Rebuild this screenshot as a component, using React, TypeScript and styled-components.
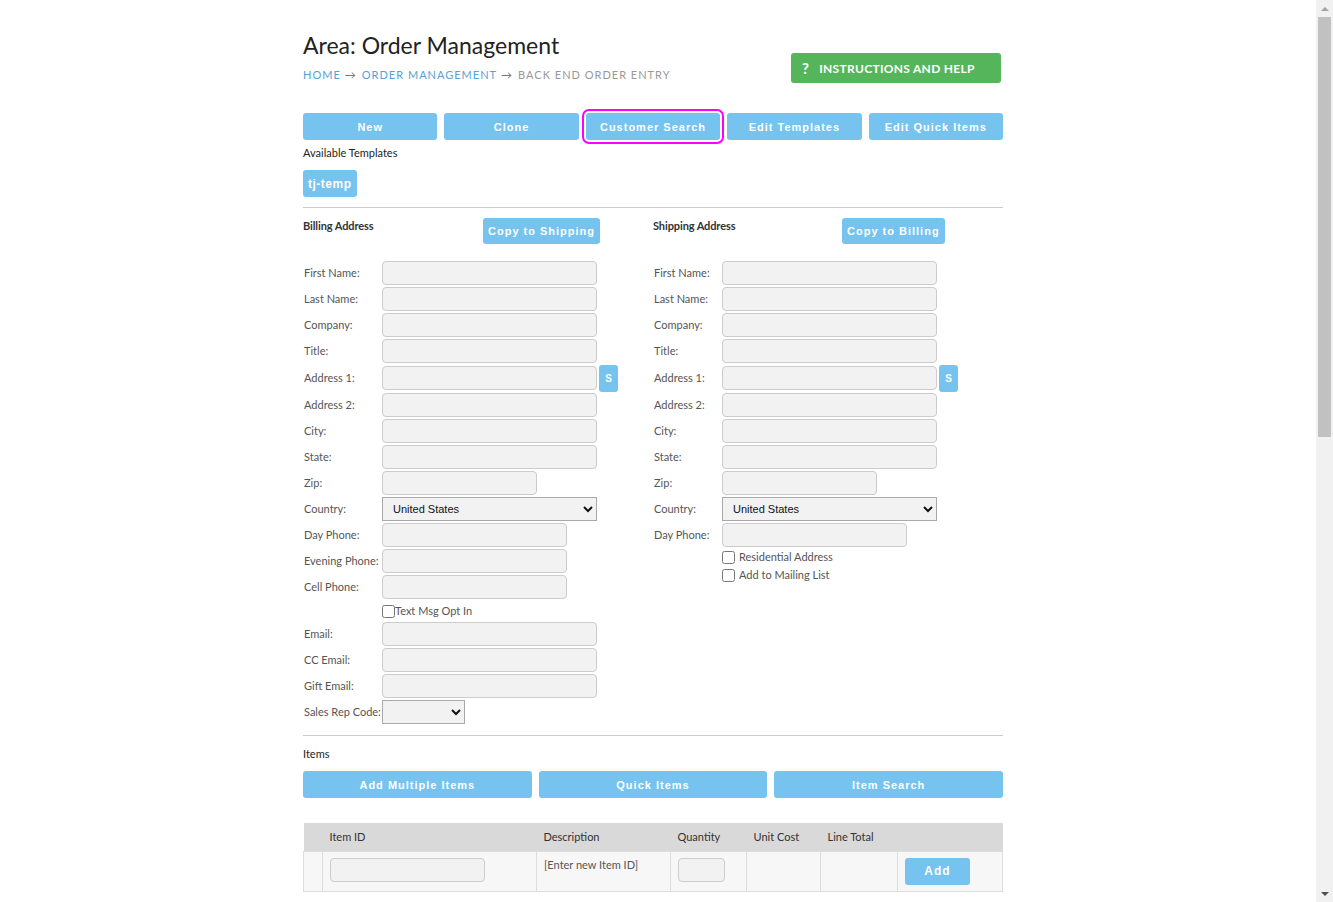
import React from "react"
import styled, { createGlobalStyle } from "styled-components"

const GlobalStyle = createGlobalStyle`
  * { box-sizing: border-box; }
  body {
    margin: 0;
    background: #fff;
    color: #333;
    font-family: Lato, "Open Sans", Arial, sans-serif;
  }
`

const BLUE = "#76c3ef"

const Shell = styled.div`
  display: flex;
  height: 100vh;
  overflow: hidden;
`

const Main = styled.main`
  flex: 1;
  overflow: hidden;
`

const ScrollTrack = styled.div`
  width: 17px;
  flex-shrink: 0;
  display: flex;
  flex-direction: column;
  align-items: center;
  background: #f1f1f1;
`

const ScrollArrow = styled.div<{ $down?: boolean }>`
  height: 17px;
  display: flex;
  align-items: center;
  justify-content: center;
  margin-top: ${(p) => (p.$down ? "auto" : "0")};

  &::before {
    content: "";
    border-left: 4px solid transparent;
    border-right: 4px solid transparent;
    ${(p) =>
      p.$down
        ? "border-top: 4px solid #505050;"
        : "border-bottom: 4px solid #a3a3a3;"}
  }
`

const ScrollThumb = styled.div`
  width: 13px;
  height: 420px;
  background: #c1c1c1;
`

const Page = styled.div`
  width: 710px;
  margin: 0 auto;
  padding: 30px 10px 10px 0;
`

const Header = styled.header`
  display: flex;
  justify-content: space-between;
  align-items: flex-start;
`

const Title = styled.h1`
  margin: 0;
  font: 400 23px/30px Lato, sans-serif;
  color: #222;
`

const Breadcrumb = styled.nav`
  margin-top: 8px;
  font: 400 11px/14px Lato, sans-serif;
  letter-spacing: 1px;
  text-transform: uppercase;
`

const Crumb = styled.span<{ $current?: boolean }>`
  color: ${(p) => (p.$current ? "#999" : "#5a9fd6")};
`

const Arrow = styled.span`
  color: #777;
  margin: 0 6px 0 4px;
  letter-spacing: 0;
`

const HelpButton = styled.button`
  margin: 23px 2px 0 0;
  width: 210px;
  height: 30px;
  display: flex;
  align-items: center;
  gap: 10px;
  padding: 0 0 0 11px;
  border: 0;
  border-radius: 3px;
  background: #55b55b;
  color: #fff;
  font: 700 12px Lato, sans-serif;
  letter-spacing: 0.3px;
  text-transform: uppercase;
  cursor: pointer;

  span {
    font-size: 15px;
    font-weight: 700;
  }
`

const Toolbar = styled.div<{ $cols: number; $top: number }>`
  display: grid;
  grid-template-columns: repeat(${(p) => p.$cols}, 1fr);
  gap: 7px;
  margin-top: ${(p) => p.$top}px;
  width: 700px;
`

const ActionButton = styled.button<{ $highlight?: boolean }>`
  height: 27px;
  border: 0;
  border-radius: 3px;
  background: ${BLUE};
  color: #fff;
  font: 700 11px "Liberation Sans", Arial, sans-serif;
  letter-spacing: 1px;
  cursor: pointer;
  outline: ${(p) => (p.$highlight ? "2px solid #ff00ff" : "none")};
  outline-offset: 2px;
`

const SectionLabel = styled.div<{ $top: number }>`
  margin-top: ${(p) => p.$top}px;
  font: 400 11px/14px Lato, sans-serif;
  color: #222;
`

const TemplateButton = styled.button`
  margin-top: 10px;
  height: 27px;
  padding: 0 5px;
  border: 0;
  border-radius: 3px;
  background: ${BLUE};
  color: #fff;
  font: 700 12px "Liberation Sans", Arial, sans-serif;
  letter-spacing: 0.5px;
`

const Divider = styled.hr<{ $top: number }>`
  margin: ${(p) => p.$top}px 0 0;
  width: 700px;
  border: 0;
  border-top: 1px solid #ccc;
`

const AddressGrid = styled.div`
  display: grid;
  grid-template-columns: 350px 350px;
  margin-top: 10px;
`

const ColumnHead = styled.div<{ $labelWidth: number }>`
  display: grid;
  grid-template-columns: ${(p) => p.$labelWidth}px auto;
  align-items: start;
  height: 26px;
  margin-bottom: 16px;
`

const ColumnTitle = styled.div`
  padding-top: 1px;
  font: 700 11px/14px Lato, sans-serif;
  letter-spacing: -0.1px;
  color: #333;
`

const CopyButton = styled.button`
  justify-self: start;
  height: 26px;
  padding: 0 5px;
  border: 0;
  border-radius: 3px;
  background: ${BLUE};
  color: #fff;
  font: 700 11px "Liberation Sans", Arial, sans-serif;
  letter-spacing: 1px;
`

const FormRow = styled.div<{ $tall?: boolean }>`
  display: flex;
  align-items: center;
  min-height: ${(p) => (p.$tall ? 28 : 26)}px;
`

const FieldLabel = styled.label<{ $w: number }>`
  width: ${(p) => p.$w}px;
  flex-shrink: 0;
  padding-left: 1px;
  font: 400 11px/14px Lato, sans-serif;
  color: #555;
  white-space: nowrap;
`

const TextField = styled.input<{ $w: number }>`
  width: ${(p) => p.$w}px;
  height: 24px;
  border: 1px solid #ccc;
  border-radius: 4px;
  background: #f2f2f2;
  font: 400 12px Lato, sans-serif;
  padding: 0 6px;
`

const Select = styled.select<{ $w: number }>`
  width: ${(p) => p.$w}px;
  height: 24px;
  border: 1px solid #a9a9a9;
  border-radius: 0;
  background: #f2f2f2;
  color: #111;
  font: 400 11px "Liberation Sans", Arial, sans-serif;
  padding: 0 6px;
`

const SideButton = styled.button`
  width: 19px;
  height: 27px;
  margin-left: 2px;
  padding: 0;
  border: 0;
  border-radius: 3px;
  background: ${BLUE};
  color: #fff;
  font: 700 10px "Liberation Sans", Arial, sans-serif;
`

const CheckRow = styled.label<{ $gap: number; $top: number; $indent: number }>`
  display: flex;
  align-items: center;
  gap: ${(p) => p.$gap}px;
  margin: ${(p) => p.$top}px 0 0 ${(p) => p.$indent}px;
  font: 400 11px/14px Lato, sans-serif;
  color: #555;

  input {
    width: 13px;
    height: 13px;
    margin: 0;
  }
`

const Spacer = styled.div<{ $h: number }>`
  height: ${(p) => p.$h}px;
`

const ItemTable = styled.table`
  margin-top: 25px;
  width: 700px;
  border-collapse: collapse;
  font: 400 11px/14px Lato, sans-serif;

  th {
    height: 28px;
    background: #d9d9d9;
    color: #333;
    font-weight: 400;
    text-align: left;
    padding: 0 7px;
  }

  td {
    height: 40px;
    background: #f7f7f7;
    border: 1px solid #ddd;
    padding: 6px 7px;
    vertical-align: top;
    color: #555;
  }
`

const SmallButton = styled.button`
  width: 65px;
  height: 27px;
  border: 0;
  border-radius: 3px;
  background: ${BLUE};
  color: #fff;
  font: 700 12px "Liberation Sans", Arial, sans-serif;
  letter-spacing: 1px;
`

type Field = {
  label: string
  width?: number
  kind?: "select" | "search"
}

const billingFields: Field[] = [
  { label: "First Name:" },
  { label: "Last Name:" },
  { label: "Company:" },
  { label: "Title:" },
  { label: "Address 1:", kind: "search" },
  { label: "Address 2:" },
  { label: "City:" },
  { label: "State:" },
  { label: "Zip:", width: 155 },
  { label: "Country:", kind: "select" },
  { label: "Day Phone:", width: 185 },
  { label: "Evening Phone:", width: 185 },
  { label: "Cell Phone:", width: 185 },
]

const billingContact: Field[] = [
  { label: "Email:" },
  { label: "CC Email:" },
  { label: "Gift Email:" },
]

const shippingFields: Field[] = billingFields.slice(0, 11)

const BILLING_LABEL = 79
const SHIPPING_LABEL = 69

const FieldRow = ({ field, labelWidth }: { field: Field; labelWidth: number }) => (
  <FormRow $tall={field.kind === "search"}>
    <FieldLabel $w={labelWidth}>{field.label}</FieldLabel>
    {field.kind === "select" ? (
      <Select $w={215} defaultValue="US">
        <option value="US">United States</option>
        <option value="CA">Canada</option>
      </Select>
    ) : (
      <TextField $w={field.width ?? 215} />
    )}
    {field.kind === "search" && <SideButton>S</SideButton>}
  </FormRow>
)

export default function App() {
  return (
    <Shell>
      <GlobalStyle />
      <Main>
        <Page>
          <Header>
            <div>
              <Title>Area: Order Management</Title>
              <Breadcrumb>
                <Crumb>Home</Crumb>
                <Arrow>→</Arrow>
                <Crumb>Order Management</Crumb>
                <Arrow>→</Arrow>
                <Crumb $current>Back End Order Entry</Crumb>
              </Breadcrumb>
            </div>
            <HelpButton>
              <span>?</span>
              Instructions and Help
            </HelpButton>
          </Header>

          <Toolbar $cols={5} $top={30}>
            <ActionButton>New</ActionButton>
            <ActionButton>Clone</ActionButton>
            <ActionButton $highlight>Customer Search</ActionButton>
            <ActionButton>Edit Templates</ActionButton>
            <ActionButton>Edit Quick Items</ActionButton>
          </Toolbar>

          <SectionLabel $top={6}>Available Templates</SectionLabel>
          <TemplateButton>tj-temp</TemplateButton>

          <Divider $top={10} />

          <AddressGrid>
            <div>
              <ColumnHead $labelWidth={180}>
                <ColumnTitle>Billing Address</ColumnTitle>
                <CopyButton>Copy to Shipping</CopyButton>
              </ColumnHead>
              {billingFields.map((f) => (
                <FieldRow key={f.label} field={f} labelWidth={BILLING_LABEL} />
              ))}
              <CheckRow $gap={0} $top={4} $indent={BILLING_LABEL}>
                <input type="checkbox" />
                Text Msg Opt In
              </CheckRow>
              <Spacer $h={3} />
              {billingContact.map((f) => (
                <FieldRow key={f.label} field={f} labelWidth={BILLING_LABEL} />
              ))}
              <FormRow>
                <FieldLabel $w={BILLING_LABEL}>Sales Rep Code:</FieldLabel>
                <Select $w={83} defaultValue="">
                  <option value=""></option>
                  <option value="01">01</option>
                </Select>
              </FormRow>
            </div>
            <div>
              <ColumnHead $labelWidth={189}>
                <ColumnTitle>Shipping Address</ColumnTitle>
                <CopyButton>Copy to Billing</CopyButton>
              </ColumnHead>
              {shippingFields.map((f) => (
                <FieldRow key={f.label} field={f} labelWidth={SHIPPING_LABEL} />
              ))}
              <CheckRow $gap={4} $top={2} $indent={SHIPPING_LABEL}>
                <input type="checkbox" />
                Residential Address
              </CheckRow>
              <CheckRow $gap={4} $top={4} $indent={SHIPPING_LABEL}>
                <input type="checkbox" />
                Add to Mailing List
              </CheckRow>
            </div>
          </AddressGrid>

          <Divider $top={10} />
          <SectionLabel $top={11}>Items</SectionLabel>
          <Toolbar $cols={3} $top={10}>
            <ActionButton>Add Multiple Items</ActionButton>
            <ActionButton>Quick Items</ActionButton>
            <ActionButton>Item Search</ActionButton>
          </Toolbar>

          <ItemTable>
            <colgroup>
              <col style={{ width: 19 }} />
              <col style={{ width: 214 }} />
              <col style={{ width: 134 }} />
              <col style={{ width: 76 }} />
              <col style={{ width: 74 }} />
              <col style={{ width: 77 }} />
              <col />
            </colgroup>
            <thead>
              <tr>
                <th></th>
                <th>Item ID</th>
                <th>Description</th>
                <th>Quantity</th>
                <th>Unit Cost</th>
                <th>Line Total</th>
                <th></th>
              </tr>
            </thead>
            <tbody>
              <tr>
                <td></td>
                <td>
                  <TextField $w={155} />
                </td>
                <td>[Enter new Item ID]</td>
                <td>
                  <TextField $w={47} />
                </td>
                <td></td>
                <td></td>
                <td>
                  <SmallButton>Add</SmallButton>
                </td>
              </tr>
            </tbody>
          </ItemTable>
        </Page>
      </Main>
      <ScrollTrack>
        <ScrollArrow />
        <ScrollThumb />
        <ScrollArrow $down />
      </ScrollTrack>
    </Shell>
  )
}
